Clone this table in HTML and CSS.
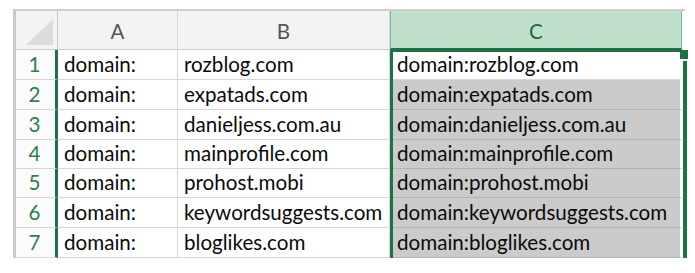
FILE: index.html
```html
<!DOCTYPE html>
<html>
<head>
<meta charset="utf-8">
<link rel="stylesheet" href="styles.css">
</head>
<body>
<div class="sheet">
  <div class="grid">
    <div class="corner"><svg class="tri" width="27" height="26" viewBox="0 0 27 26"><polygon points="27,0 27,26 0,26" fill="#dcdcdc"/></svg></div>
    <div class="colhead">A</div>
    <div class="colhead">B</div>
    <div class="colhead colsel">C</div>

    <div class="rowhead">1</div><div class="cell">domain:</div><div class="cell">rozblog.com</div><div class="cell c active">domain:rozblog.com</div>
    <div class="rowhead">2</div><div class="cell">domain:</div><div class="cell">expatads.com</div><div class="cell c">domain:expatads.com</div>
    <div class="rowhead">3</div><div class="cell">domain:</div><div class="cell">danieljess.com.au</div><div class="cell c">domain:danieljess.com.au</div>
    <div class="rowhead">4</div><div class="cell">domain:</div><div class="cell">mainprofile.com</div><div class="cell c">domain:mainprofile.com</div>
    <div class="rowhead">5</div><div class="cell">domain:</div><div class="cell">prohost.mobi</div><div class="cell c">domain:prohost.mobi</div>
    <div class="rowhead">6</div><div class="cell">domain:</div><div class="cell">keywordsuggests.com</div><div class="cell c">domain:keywordsuggests.com</div>
    <div class="rowhead">7</div><div class="cell">domain:</div><div class="cell">bloglikes.com</div><div class="cell c">domain:bloglikes.com</div>

    <div class="selection"></div>
  </div>
</div>
</body>
</html>
```

FILE: styles.css
```css
html, body {
  margin: 0;
  padding: 0;
  background: #ffffff;
}
body {
  font-family: Lato, "Liberation Sans", sans-serif;
  font-size: 20.6px;
  color: #0a0a0a;
}
.sheet {
  margin: 9px 0 0 13px;
  width: 669px;
  border-top: 2px solid #cfcfcf;
  border-left: 3px solid #c9c9c9;
}
.grid {
  position: relative;
  display: grid;
  grid-template-columns: 42px 120px 212px 292px;
  grid-template-rows: 39px 30px 30px 30px 29px 29px 30px 30px;
}
.corner {
  background: #f3f3f3;
  border-right: 1px solid #c8c8c8;
  border-bottom: 1px solid #c8c8c8;
  display: flex;
  align-items: flex-end;
  justify-content: flex-end;
  padding: 0 4px 4px 0;
}
.tri { display: block; }
.colhead {
  background: #f3f3f3;
  border-right: 1px solid #d6d6d6;
  border-bottom: 1px solid #c8c8c8;
  color: #555;
  display: flex;
  align-items: center;
  justify-content: center;
  padding-top: 2px;
}
.colsel {
  background: #bfe1cc;
  color: #1d6b3e;
  border-left: 1px solid #6fbf8c;
  border-right: 1px solid #6fbf8c;
  border-bottom: 2px solid #1e7145;
}
.rowhead {
  background: #fbfbfb;
  border-right: 3px solid #1e7145;
  border-bottom: 1px solid #d6d6d6;
  color: #2e7d4d;
  display: flex;
  align-items: flex-end;
  justify-content: center;
  padding: 0 2px 3px 0;
}
.cell {
  border-right: 1px solid #d6d6d6;
  border-bottom: 1px solid #d6d6d6;
  display: flex;
  align-items: flex-end;
  padding: 0 0 3px 6px;
  white-space: nowrap;
  overflow: hidden;
}
.c {
  background: #cbcbcb;
  border-bottom: 1px solid #b3b3b3;
  border-right: 2px solid #fff;
  padding-left: 7px;
}
.c.active {
  background: #fff;
  border-bottom: 1px solid #d6d6d6;
}
.selection {
  position: absolute;
  grid-column: 4;
  grid-row: 2 / 9;
  top: 0;
  left: 0;
  right: -2px;
  bottom: -1px;
  border-top: 2px solid #1e7145;
  border-left: 3px solid #1e7145;
  border-right: 4px solid #1e7145;
  pointer-events: none;
}
.selection::after {
  content: "";
  position: absolute;
  top: -2px;
  right: -5px;
  width: 8px;
  height: 9px;
  background: #1e7145;
  border-bottom: 2px solid #fff;
}
```
